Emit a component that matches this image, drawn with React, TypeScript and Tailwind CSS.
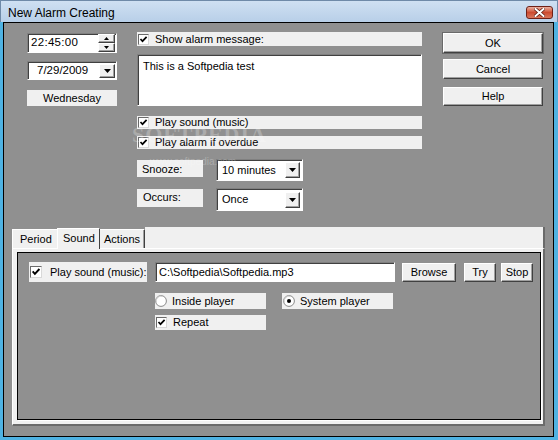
import React from 'react';

const sunken =
  'border border-t-[#808080] border-l-[#808080] border-b-white border-r-white shadow-[inset_1px_1px_0_#404040] bg-white';
const raised =
  'border border-t-white border-l-white border-b-[#404040] border-r-[#404040] shadow-[inset_-1px_-1px_0_#a0a0a0] bg-[#f0f0f0]';

function Check({ size = 11 }: { size?: number }) {
  return (
    <span
      className="shrink-0 inline-block bg-white border border-t-[#6a6a6a] border-l-[#6a6a6a] border-b-[#d8d8d8] border-r-[#d8d8d8]"
      style={{ width: size, height: size }}
    >
      <svg viewBox="0 0 9 9" className="w-full h-full block">
        <path d="M1.5 4 L3.5 6.2 L7.6 1.8" fill="none" stroke="#000" strokeWidth="1.7" />
      </svg>
    </span>
  );
}

function Radio({ on }: { on?: boolean }) {
  return (
    <svg width="12" height="12" viewBox="0 0 12 12" className="shrink-0">
      <circle cx="6" cy="6" r="5.4" fill="#fff" stroke="#8a8a8a" strokeWidth="1" />
      <path d="M1.5 8 A5 5 0 0 1 8 1.5" fill="none" stroke="#d0d0d0" strokeWidth="1" />
      {on && <circle cx="6" cy="6" r="2" fill="#000" />}
    </svg>
  );
}

function DropBtn({ className }: { className: string }) {
  return (
    <span className={`${raised} ${className} flex items-center justify-center`}>
      <svg width="7" height="4" viewBox="0 0 7 4">
        <path d="M0 0 H7 L3.5 4 Z" fill="#000" />
      </svg>
    </span>
  );
}

function SpinBtn({ up }: { up?: boolean }) {
  return (
    <span className={`${raised} w-[17px] h-[9px] flex items-center justify-center`}>
      <svg width="5" height="3" viewBox="0 0 5 3">
        <path d={up ? 'M0 3 H5 L2.5 0 Z' : 'M0 0 H5 L2.5 3 Z'} fill="#000" />
      </svg>
    </span>
  );
}

function Button({ label, className }: { label: string; className: string }) {
  return (
    <div className={`${raised} ${className} flex items-center justify-center text-black`}>
      {label}
    </div>
  );
}

function Combo({ value, h }: { value: string; h: string }) {
  return (
    <div className={`${sunken} w-[87px] ${h} flex items-center justify-between pl-[5px] pr-[2px]`}>
      <span>{value}</span>
      <DropBtn className="w-[15px] h-[16px]" />
    </div>
  );
}

export default function App() {
  return (
    <div
      className="relative w-[558px] h-[440px] overflow-hidden bg-[#4fb2e2] text-[11px] leading-none text-black"
      style={{ fontFamily: '"Liberation Sans", Arial, sans-serif' }}
    >
      {/* title bar */}
      <div className="h-[22px] flex items-center justify-between bg-gradient-to-b from-[#cfe0f2] to-[#b8cfe8] border-l border-r border-t border-[#6f8aa8]">
        <span className="pl-[7px] pt-[2px] text-[12px]">New Alarm Creating</span>
        <div className="mr-[4px] mt-[2px] w-[27px] h-[13px] rounded-[3px] border border-[#6e2118] bg-gradient-to-b from-[#eab0a0] via-[#cc4b30] to-[#d9765c] flex items-center justify-center">
          <svg width="11" height="9" viewBox="0 0 11 9">
            <path d="M1.5 1 L9.5 8 M9.5 1 L1.5 8" stroke="#5a1a10" strokeWidth="3.4" strokeLinecap="square" />
            <path d="M1.5 1 L9.5 8 M9.5 1 L1.5 8" stroke="#fff" strokeWidth="2" strokeLinecap="square" />
          </svg>
        </div>
      </div>

      {/* body */}
      <div className="ml-[3px] w-[551px] h-[415px] border border-black bg-[#909090] flex flex-col">
        <div className="flex items-start pt-[9px]">
          {/* left column */}
          <div className="ml-[23px] w-[90px] flex flex-col">
            <div className={`${sunken} mt-[1px] h-[20px] flex items-center justify-between pl-[3px] pr-[1px]`}>
              <span className="text-[11.5px] tracking-[0.3px]">22:45:00</span>
              <div className="flex flex-col">
                <SpinBtn up />
                <SpinBtn />
              </div>
            </div>
            <div className={`${sunken} mt-[8px] h-[19px] flex items-center justify-between pl-[9px] pr-[1px]`}>
              <span className="text-[11.5px]">7/29/2009</span>
              <DropBtn className="w-[16px] h-[14px]" />
            </div>
            <div className="mt-[10px] h-[16px] bg-[#f0f0f0] flex items-center justify-center">Wednesday</div>
          </div>

          {/* middle column */}
          <div className="ml-[20px] w-[285px] flex flex-col">
            <div className="h-[14px] bg-[#f0f0f0] flex items-center pl-[1px] gap-[6px]">
              <Check />
              <span>Show alarm message:</span>
            </div>
            <div className={`${sunken} mt-[8px] h-[52px] pl-[5px] pt-[6px]`}>This is a Softpedia test</div>
            <div className="mt-[10px] h-[13px] bg-[#f0f0f0] flex items-center pl-[1px] gap-[6px]">
              <Check />
              <span>Play sound (music)</span>
            </div>
            <div className="mt-[7px] h-[13px] bg-[#f0f0f0] flex items-center pl-[1px] gap-[6px]">
              <Check />
              <span>Play alarm if overdue</span>
            </div>
            <div className="mt-[10px] flex items-start">
              <div className="mt-[1px] w-[66px] h-[17px] bg-[#f0f0f0] pl-[5px] pt-[4px]">Snooze:</div>
              <div className="ml-[13px]">
                <Combo value="10 minutes" h="h-[22px]" />
              </div>
            </div>
            <div className="mt-[7px] flex items-start">
              <div className="mt-[1px] w-[66px] h-[18px] bg-[#f0f0f0] pl-[6px] pt-[3px]">Occurs:</div>
              <div className="ml-[13px]">
                <Combo value="Once" h="h-[23px]" />
              </div>
            </div>
          </div>

          {/* right column */}
          <div className="ml-[21px] w-[100px] flex flex-col">
            <Button label="OK" className="mt-[1px] h-[20px] outline outline-1 outline-[#6a6a6a]" />
            <Button label="Cancel" className="mt-[6px] h-[20px]" />
            <Button label="Help" className="mt-[8px] h-[19px]" />
          </div>
        </div>

        {/* tab control */}
        <div className="mt-[16px] ml-[8px] w-[533px] h-[199px] flex flex-col">
          <div className="h-[21px] flex items-end">
            <div className="w-[45px] h-[19px] bg-[#f0f0f0] border-l border-t border-white pl-[7px] pt-[4px]">Period</div>
            <div className="relative z-10 -mb-[1px] w-[43px] h-[21px] bg-[#f0f0f0] border-l border-t border-white border-r border-r-[#404040] pl-[5px] pt-[4px]">
              Sound
            </div>
            <div className="w-[45px] h-[19px] bg-[#f0f0f0] border-t border-white border-r border-r-[#404040] shadow-[inset_-1px_0_0_#a0a0a0] pl-[4px] pt-[4px]">
              Actions
            </div>
            <div className="flex-1 h-[21px] bg-[#f0f0f0] border-r-2 border-r-[#6a6a6a]" />
          </div>
          <div className="flex-1 flex flex-col bg-[#f0f0f0] border-t border-l border-white border-r-2 border-r-[#6a6a6a] border-b-2 border-b-[#6a6a6a] pl-[4px] pt-[3px] pr-[2px] pb-[4px]">
            <div className="flex-1 border border-black bg-[#909090] shadow-[1px_1px_0_#ffffff] flex flex-col">
              <div className="mt-[9px] flex items-start">
                <div className="ml-[11px] w-[118px] h-[20px] bg-[#f0f0f0] flex items-center pl-[1px] gap-[8px]">
                  <Check size={12} />
                  <span>Play sound (music):</span>
                </div>
                <div className={`${sunken} ml-[8px] w-[240px] h-[20px] flex items-center pl-[3px]`}>
                  C:\Softpedia\Softpedia.mp3
                </div>
                <Button label="Browse" className="ml-[7px] mt-[1px] w-[54px] h-[19px]" />
                <Button label="Try" className="ml-[8px] mt-[1px] w-[32px] h-[19px]" />
                <Button label="Stop" className="ml-[5px] mt-[1px] w-[32px] h-[19px]" />
              </div>
              <div className="mt-[11px] flex items-start">
                <div className="ml-[137px] w-[111px] h-[16px] bg-[#f0f0f0] flex items-center gap-[5px]">
                  <Radio />
                  <span>Inside player</span>
                </div>
                <div className="ml-[16px] w-[111px] h-[16px] bg-[#f0f0f0] flex items-center pl-[1px] gap-[5px]">
                  <Radio on />
                  <span>System player</span>
                </div>
              </div>
              <div className="mt-[6px] ml-[137px] w-[111px] h-[15px] bg-[#f0f0f0] flex items-center pl-[1px] gap-[6px]">
                <Check />
                <span>Repeat</span>
              </div>
            </div>
          </div>
        </div>
      </div>

      {/* softpedia watermark */}
      <div
        className="absolute left-[132px] top-[124px] text-[22px] font-bold tracking-[1px] text-white/25 pointer-events-none"
        style={{ fontFamily: '"Liberation Serif", serif' }}
      >
        SOFTPEDIA
      </div>
      <div className="absolute left-[150px] top-[157px] text-[10px] text-white/25 pointer-events-none">www.softpedia.com</div>
    </div>
  );
}
